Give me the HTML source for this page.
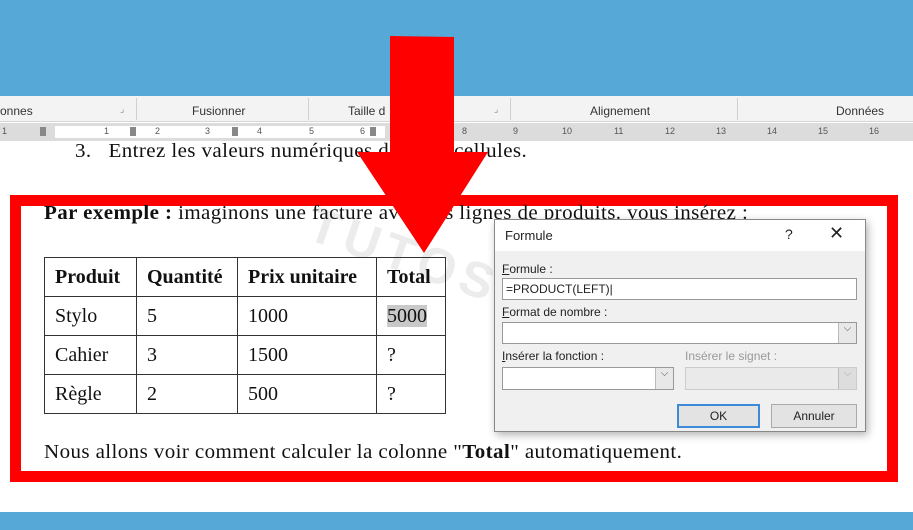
<!DOCTYPE html>
<html><head><meta charset="utf-8"><style>
*{margin:0;padding:0;box-sizing:border-box}
body{width:913px;height:530px;position:relative;overflow:hidden;background:#fff;font-family:"Liberation Serif",serif}
.a{position:absolute}
.rib{font-family:"Liberation Sans",sans-serif;font-size:12px;color:#333;top:104px}
.ser{font-family:"Liberation Serif",serif;font-size:21px;letter-spacing:0.4px;color:#111;white-space:nowrap;transform:scaleY(0.95);transform-origin:left top}
table{border-collapse:collapse}
td{border:1.5px solid #333;font-size:20px;padding:0 10px;height:39px;color:#111}
.d{font-family:"Liberation Sans",sans-serif;font-size:12px;color:#222}
.box{background:#fff;border:1px solid #999}
.dd{position:absolute;right:0;top:0;bottom:0;width:18px;border-left:1px solid #bbb;background:#e8e8e8;font-size:10px;text-align:center;color:#555}
.r{position:absolute;top:126px;font-family:'Liberation Sans',sans-serif;font-size:9px;color:#555}
</style></head><body>
<div class="a" style="left:0;top:0;width:913px;height:96px;background:#56a8d6"></div>
<div class="a" style="left:0;top:96px;width:913px;height:26px;background:#f3f3f3;border-bottom:1px solid #d6d6d6"></div>
<div class="a rib" style="left:0">onnes</div>
<div class="a rib" style="left:120px;font-size:9px;color:#888">⌟</div>
<div class="a" style="left:136px;top:98px;width:1px;height:22px;background:#d0d0d0"></div>
<div class="a rib" style="left:192px">Fusionner</div>
<div class="a" style="left:308px;top:98px;width:1px;height:22px;background:#d0d0d0"></div>
<div class="a rib" style="left:348px">Taille d</div>
<div class="a rib" style="left:494px;font-size:9px;color:#888">⌟</div>
<div class="a" style="left:510px;top:98px;width:1px;height:22px;background:#d0d0d0"></div>
<div class="a rib" style="left:590px">Alignement</div>
<div class="a" style="left:737px;top:98px;width:1px;height:22px;background:#d0d0d0"></div>
<div class="a rib" style="left:836px">Données</div>
<div class="a" style="left:0;top:123px;width:913px;height:18px;background:#dcdcdc"></div>
<div class="a" style="left:55px;top:126px;width:330px;height:12px;background:#fff"></div>
<div class="a" style="left:40px;top:127px;width:6px;height:9px;background:#888"></div>
<div class="a" style="left:130px;top:127px;width:6px;height:9px;background:#888"></div>
<div class="a" style="left:232px;top:127px;width:6px;height:9px;background:#888"></div>
<div class="a" style="left:370px;top:127px;width:6px;height:9px;background:#888"></div>
<span class="r" style="left:2px">1</span><span class="r" style="left:104px">1</span><span class="r" style="left:155px">2</span><span class="r" style="left:205px">3</span><span class="r" style="left:257px">4</span><span class="r" style="left:309px">5</span><span class="r" style="left:360px">6</span><span class="r" style="left:462px">8</span><span class="r" style="left:513px">9</span><span class="r" style="left:562px">10</span><span class="r" style="left:614px">11</span><span class="r" style="left:665px">12</span><span class="r" style="left:716px">13</span><span class="r" style="left:767px">14</span><span class="r" style="left:818px">15</span><span class="r" style="left:869px">16</span>
<div class="a ser" style="left:75px;top:139px;clip-path:inset(3px 0 0 0)">3.&nbsp;&nbsp; Entrez les valeurs numériques dans les cellules.</div>
<div class="a" style="left:0;top:512px;width:913px;height:18px;background:#56a8d6"></div>
<div class="a" style="left:320px;top:195px;transform:rotate(19deg);transform-origin:left top;font-family:'Liberation Sans',sans-serif;font-weight:bold;font-size:50px;color:rgba(150,150,150,0.18);letter-spacing:6px;white-space:nowrap">TUTOSTECH.COM</div>
<div class="a" style="left:10px;top:195px;width:888px;height:287px;border:11px solid #f00"></div>
<div class="a ser" style="left:44px;top:201px"><b>Par exemple :</b> imaginons une facture avec des lignes de produits. vous insérez :</div>
<table class="a" style="left:44px;top:257px">
<tr><td style="width:92px"><b>Produit</b></td><td style="width:101px"><b>Quantité</b></td><td style="width:139px"><b>Prix unitaire</b></td><td style="width:69px"><b>Total</b></td></tr>
<tr><td>Stylo</td><td>5</td><td>1000</td><td><span style="background:#c8c8c8">5000</span></td></tr>
<tr><td>Cahier</td><td>3</td><td>1500</td><td>?</td></tr>
<tr><td>Règle</td><td>2</td><td>500</td><td>?</td></tr>
</table>
<div class="a ser" style="left:44px;top:440px">Nous allons voir comment calculer la colonne "<b>Total</b>" automatiquement.</div>
<div class="a" style="left:494px;top:219px;width:372px;height:213px;background:#f0f0f0;border:1px solid #888;box-shadow:2px 3px 8px rgba(0,0,0,.3)">
 <div style="height:31px;background:#fff"></div>
 <div class="a d" style="left:10px;top:8px;font-size:13px">Formule</div>
 <div class="a d" style="left:290px;top:6px;font-size:14px">?</div>
 <div class="a d" style="left:334px;top:3px;font-size:18px">✕</div>
 <div class="a d" style="left:7px;top:42px"><u>F</u>ormule :</div>
 <div class="a box d" style="left:7px;top:58px;width:355px;height:22px;padding:3px 3px">=PRODUCT(LEFT)|</div>
 <div class="a d" style="left:7px;top:85px"><u>F</u>ormat de nombre :</div>
 <div class="a box" style="left:7px;top:102px;width:355px;height:22px"><div class="dd">⌵</div></div>
 <div class="a d" style="left:7px;top:129px"><u>I</u>nsérer la fonction :</div>
 <div class="a box" style="left:7px;top:147px;width:172px;height:23px"><div class="dd">⌵</div></div>
 <div class="a d" style="left:190px;top:129px;color:#999">Insérer le signet :</div>
 <div class="a" style="left:190px;top:147px;width:172px;height:23px;border:1px solid #ccc;background:#eaeaea"><div class="dd" style="background:#ddd;color:#aaa">⌵</div></div>
 <div class="a d" style="left:182px;top:184px;width:83px;height:24px;border:2px solid #3c8ad8;background:#e3e3e3;text-align:center;line-height:20px">OK</div>
 <div class="a d" style="left:276px;top:184px;width:86px;height:24px;border:1px solid #aaa;background:#e3e3e3;text-align:center;line-height:22px">Annuler</div>
</div>
<svg class="a" style="left:0;top:0" width="913" height="530"><polygon points="390,36 454,37 454,152 488,152 424,253 357,152 390,152" fill="#f00"/></svg>
</body></html>
